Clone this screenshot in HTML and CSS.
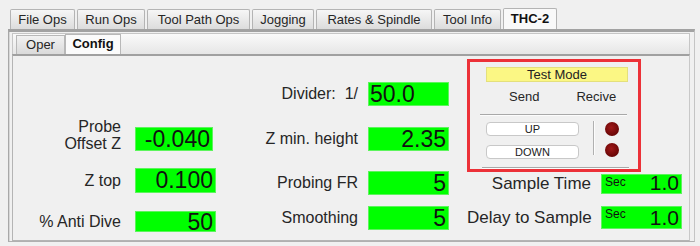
FILE: index.html
```html
<!DOCTYPE html>
<html lang="en">
<head>
  <meta charset="UTF-8" />
  <title>THC-2 Config</title>
  <link rel="stylesheet" href="styles.css">
</head>
<body>
  <div class="app">
    <div class="tabs">
      <div class="tab" style="width:65px">File Ops</div>
      <div class="tab" style="width:68px">Run Ops</div>
      <div class="tab" style="width:103px">Tool Path Ops</div>
      <div class="tab" style="width:62px">Jogging</div>
      <div class="tab" style="width:116px">Rates &amp; Spindle</div>
      <div class="tab" style="width:67px">Tool Info</div>
      <div class="tab active" style="width:54px">THC-2</div>
    </div>

    <div class="outer-body">
      <div class="subtabs">
        <div class="subtab" style="width:49px">Oper</div>
        <div class="subtab active" style="width:56px">Config</div>
      </div>

      <div class="content">
        <!-- left column -->
        <div class="col col-left">
          <div class="row row-probe">
            <div class="label two-line">Probe<br>Offset Z</div>
            <div class="field big narrow">-0.040</div>
          </div>
          <div class="row row-ztop">
            <div class="label">Z top</div>
            <div class="field big">0.100</div>
          </div>
          <div class="row row-anti">
            <div class="label">% Anti Dive</div>
            <div class="field big">50</div>
          </div>
        </div>

        <!-- middle column -->
        <div class="col col-mid">
          <div class="row row-divider">
            <div class="label">Divider:&nbsp; 1/</div>
            <div class="field big left">50.0</div>
          </div>
          <div class="row row-zmin">
            <div class="label">Z min. height</div>
            <div class="field big">2.35</div>
          </div>
          <div class="row row-probing">
            <div class="label">Probing FR</div>
            <div class="field big">5</div>
          </div>
          <div class="row row-smooth">
            <div class="label">Smoothing</div>
            <div class="field big">5</div>
          </div>
        </div>

        <!-- right column -->
        <div class="col col-right">
          <div class="test-box">
            <div class="test-mode">Test Mode</div>
            <div class="send-row">
              <span class="send">Send</span>
              <span class="recive">Recive</span>
            </div>
            <div class="hsep"></div>
            <div class="btn-area">
              <div class="btns">
                <div class="btn">UP</div>
                <div class="btn">DOWN</div>
              </div>
              <div class="vsep"></div>
              <div class="leds">
                <div class="led"></div>
                <div class="led"></div>
              </div>
            </div>
            <div class="hsep bottom"></div>
          </div>
          <div class="row row-sample">
            <div class="label wide">Sample Time</div>
            <div class="field sec"><span class="unit">Sec</span><span class="val">1.0</span></div>
          </div>
          <div class="row row-delay">
            <div class="label wide">Delay to Sample</div>
            <div class="field sec"><span class="unit">Sec</span><span class="val">1.0</span></div>
          </div>
        </div>
      </div>
    </div>
  </div>
</body>
</html>
```

FILE: styles.css
```css
* {
  box-sizing: border-box;
}

body {
  margin: 0;
  background: #f0f0f0;
  font-family: "Liberation Sans", Arial, sans-serif;
  color: #262626;
  width: 700px;
  height: 246px;
  overflow: hidden;
}

.app {
  padding: 8px 5px 0 8px;
}

/* main tab strip */
.tabs {
  display: flex;
  gap: 2px;
  padding-left: 2px;
  height: 21px;
  align-items: flex-end;
}

.tab {
  height: 20px;
  border: 1px solid #b4b4b4;
  border-bottom: none;
  border-radius: 2px 2px 0 0;
  background: linear-gradient(#f6f6f6, #dcdcdc);
  font-size: 13px;
  line-height: 19px;
  text-align: center;
  white-space: nowrap;
}

.tab.active {
  height: 21px;
  background: #f9f9f9;
  font-weight: bold;
  color: #111;
}

.outer-body {
  height: 213px;
  border-top: 3px solid #a2a2a2;
  border-left: 1px solid #a8a8a8;
  border-right: 1px solid #c4c4c4;
  border-bottom: 1px solid #b0b0b0;
  padding: 0 4px 1px 3px;
  box-shadow: inset 1px 0 0 #d8d8d8;
}

/* inner tab strip */
.subtabs {
  display: flex;
  align-items: flex-end;
  height: 21px;
  margin-top: 1px;
  padding-left: 3px;
  border: 1px solid #c6c6c6;
  border-bottom: none;
  background: linear-gradient(#fafafa, #e6e6e6);
}

.subtab {
  height: 19px;
  border: 1px solid #b8b8b8;
  border-bottom: none;
  background: linear-gradient(#f2f2f2, #dadada);
  font-size: 13px;
  line-height: 18px;
  text-align: center;
}

.subtab.active {
  height: 20px;
  background: #fbfbfb;
  font-weight: bold;
  color: #111;
}

.content {
  display: flex;
  height: 187px;
  border-top: 2px solid #a0a0a0;
  border-left: 1px solid #b4b4b4;
  border-right: 1px solid #c8c8c8;
  border-bottom: 1px solid #b4b4b4;
  background: #f0f0f0;
}

.col {
  display: flex;
  flex-direction: column;
}

.row {
  display: flex;
  align-items: center;
}

.label {
  text-align: right;
  font-size: 16px;
  white-space: nowrap;
}

.row-probe {
  height: 24px;
  align-items: flex-end;
}

.two-line {
  line-height: 17px;
  margin-bottom: -1px;
}

.field {
  background: #00ff00;
  border: 1px solid #5cf55c;
  color: #111;
  text-align: right;
  white-space: nowrap;
}

.field.big {
  width: 81px;
  height: 24px;
  font-size: 23px;
  line-height: 23px;
  padding-right: 2px;
}

.field.narrow {
  width: 78px;
}

.field.left {
  text-align: left;
  padding-left: 1px;
}

/* left column */
.col-left {
  padding-top: 71px;
}

.col-left .label {
  width: 108px;
  margin-right: 14px;
}

.row-ztop {
  margin-top: 17px;
}

.row-ztop .field {
  height: 25px;
}

.row-anti {
  margin-top: 18px;
}

.row-anti .field {
  height: 21px;
  line-height: 20px;
}

/* middle column */
.col-mid {
  padding-top: 26px;
  margin-left: 22px;
}

.col-mid .label {
  width: 120px;
  margin-right: 10px;
}

.row-zmin {
  margin-top: 21px;
}

.row-probing {
  margin-top: 20px;
}

.row-smooth {
  margin-top: 11px;
}

/* right column */
.col-right {
  margin-left: 18px;
  padding-top: 3px;
}

.test-box {
  width: 174px;
  height: 113px;
  border: 3px solid #ec3138;
  padding-top: 5px;
}

.test-mode {
  width: 142px;
  height: 15px;
  margin-left: 16px;
  background: #fbf784;
  border: 1px solid #e4e07c;
  font-size: 13px;
  line-height: 13px;
  text-align: center;
  color: #222;
}

.send-row {
  display: flex;
  font-size: 13px;
  margin-top: 7px;
  height: 16px;
}

.send {
  margin-left: 39px;
}

.recive {
  margin-left: 37px;
}

.hsep {
  height: 1px;
  width: 147px;
  margin: 9px 0 0 10px;
  background: #a8a8a8;
  box-shadow: 0 1px 0 #fcfcfc;
}

.btn-area {
  display: flex;
  margin-top: 7px;
  height: 38px;
}

.btns {
  display: flex;
  flex-direction: column;
  gap: 9px;
  margin-left: 16px;
}

.btn {
  width: 93px;
  height: 14px;
  background: #fff;
  border: 1px solid #c8c8c8;
  border-radius: 4px;
  font-size: 11px;
  line-height: 12px;
  text-align: center;
  color: #222;
}

.vsep {
  width: 1px;
  height: 34px;
  margin: -1px 0 0 14px;
  background: #b0b0b0;
  box-shadow: 1px 0 0 #fcfcfc;
}

.leds {
  display: flex;
  flex-direction: column;
  gap: 7px;
  margin-left: 11px;
}

.led {
  width: 14px;
  height: 14px;
  border-radius: 50%;
  background: radial-gradient(circle at 45% 40%, #a01818, #6a0606 70%, #4a0202);
}

.hsep.bottom {
  margin: 7px 0 0 12px;
}

.col-right .label.wide {
  width: 124px;
  margin-right: 10px;
  font-size: 17px;
}

.row-sample {
  margin-top: 2px;
}

.row-delay {
  margin-top: 12px;
}

.field.sec {
  display: flex;
  justify-content: space-between;
  width: 81px;
  height: 20px;
  padding: 0 2px 0 3px;
}

.row-delay .field.sec {
  height: 23px;
}

.unit {
  font-size: 12px;
  line-height: 12px;
  margin-top: 1px;
}

.val {
  font-size: 21px;
  line-height: 20px;
  align-self: flex-end;
}
```
